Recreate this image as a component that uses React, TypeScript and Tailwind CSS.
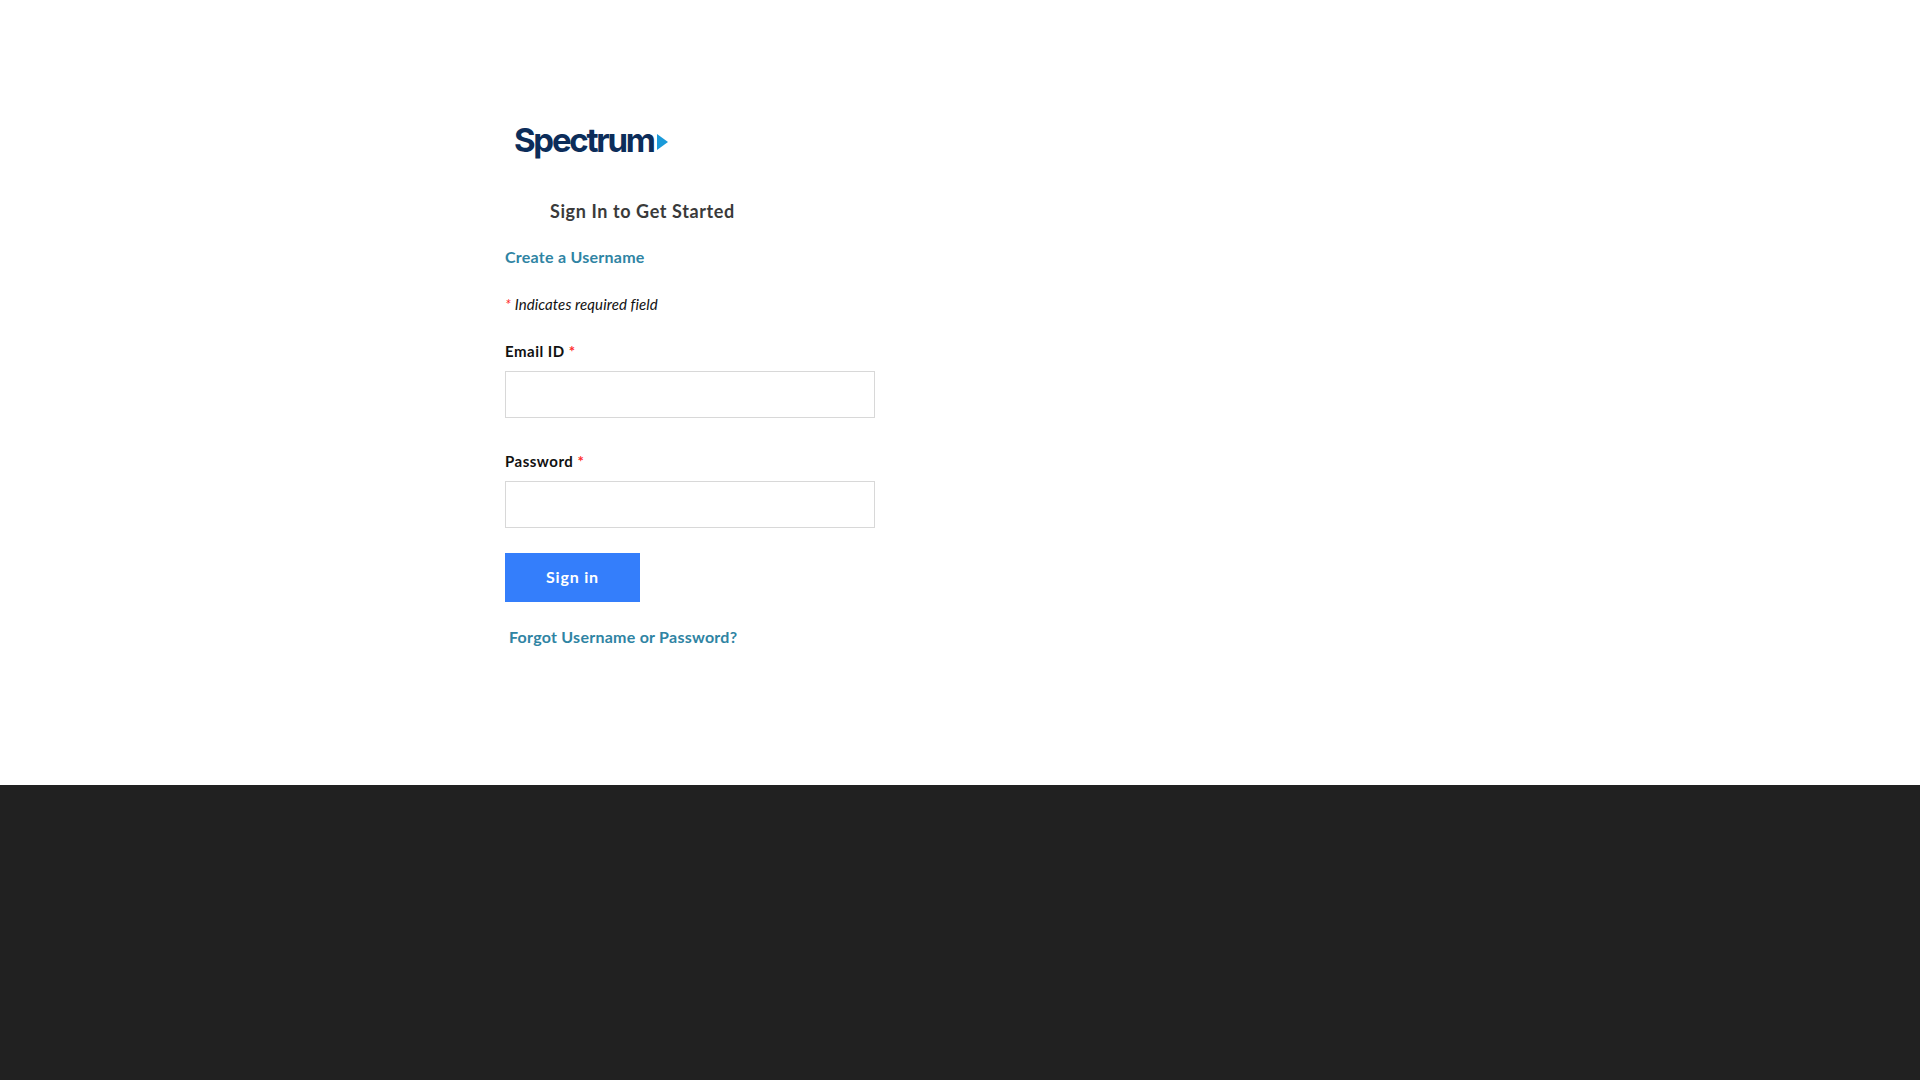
function Req() {
  return <span className="text-[#ff2b2b]">*</span>
}

function Field({ label }: { label: string }) {
  return (
    <div className="flex flex-col">
      <label className="mb-[10px] h-[20px] text-[15px] leading-[20px] font-bold tracking-[0.5px] text-[#111111]">
        {label} <Req />
      </label>
      <input className="h-[47px] w-[370px] border border-[#d8d8d8] bg-white outline-none" />
    </div>
  )
}

function Logo() {
  return (
    <div className="ml-[9px] flex h-[40px] items-center">
      <span className="font-['Inter',sans-serif] text-[33px] leading-[38px] font-bold tracking-[-2.25px] text-[#0c2d5a]">
        Spectrum
      </span>
      <svg width="11" height="16" viewBox="0 0 11 16" className="ml-[3px] mt-[3px]">
        <path d="M0 0 L11 8 L0 16 Z" fill="#1a9ad9" />
      </svg>
    </div>
  )
}

function App() {
  return (
    <div className="flex h-[1080px] flex-col font-['Lato',sans-serif]">
      <main className="flex h-[785px] flex-col pt-[120px] pl-[505px]">
        <Logo />
        <h1 className="mt-[39px] ml-[45px] text-[18px] leading-[24px] font-bold tracking-[0.6px] text-[#3a3a3a]">
          Sign In to Get Started
        </h1>
        <a className="mt-[23px] text-[16px] leading-[22px] font-bold tracking-[0.25px] text-[#2f84a3]">
          Create a Username
        </a>
        <p className="mt-[26px] text-[15px] leading-[20px] tracking-[0.1px] italic text-[#111111]">
          <Req /> Indicates required field
        </p>
        <div className="mt-[27px] flex flex-col gap-[33px]">
          <Field label="Email ID" />
          <Field label="Password" />
        </div>
        <button className="mt-[25px] h-[49px] w-[135px] bg-[#347efb] pb-[1px] text-[16px] font-bold tracking-[0.8px] text-white">
          Sign in
        </button>
        <a className="mt-[24px] ml-[4px] text-[16px] leading-[22px] font-bold tracking-[0.25px] text-[#2f84a3]">
          Forgot Username or Password?
        </a>
      </main>
      <footer className="flex-1 bg-[#212121]"></footer>
    </div>
  )
}

export default App
